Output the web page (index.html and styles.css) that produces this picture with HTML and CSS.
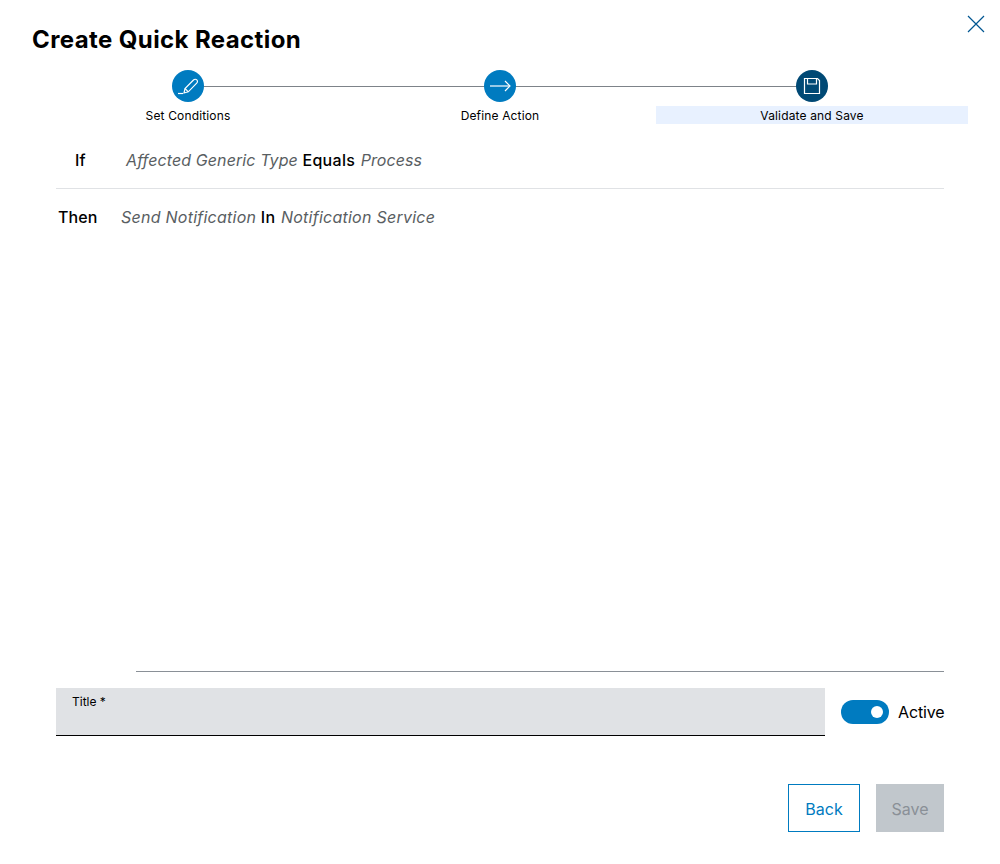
FILE: index.html
```html
<!DOCTYPE html>
<html lang="en">
<head>
<meta charset="utf-8">
<title>Create Quick Reaction</title>
<link rel="stylesheet" href="styles.css">
</head>
<body>
<div class="dialog">
  <header class="head">
    <h1 class="title">Create Quick Reaction</h1>
    <button class="close" aria-label="Close">
      <svg width="18" height="18" viewBox="0 0 18 18"><path d="M1 1L17 17M17 1L1 17" stroke="#005691" stroke-width="1.2" fill="none"/></svg>
    </button>
  </header>
  <ol class="stepper">
    <li class="step">
      <span class="dot">
        <svg width="24" height="24" viewBox="0 0 24 24" fill="none" stroke="#fff" stroke-width="1.2"><path d="M2 19.5H7"/><path d="M8 19L9 14.5L17.5 6C18.5 5 19.9 5 20.8 5.9C21.7 6.8 21.7 8.1 20.7 9.1L12.3 17.8Z"/><path d="M9 14.5L12.3 17.8"/></svg>
      </span>
      <span class="label">Set Conditions</span>
    </li>
    <li class="step">
      <span class="dot">
        <svg width="24" height="24" viewBox="0 0 24 24" fill="none" stroke="#fff" stroke-width="1.2"><path d="M2 12H21.5"/><path d="M17 7L22 12L17 17"/></svg>
      </span>
      <span class="label">Define Action</span>
    </li>
    <li class="step step-current">
      <span class="dot">
        <svg width="24" height="24" viewBox="0 0 24 24" fill="none" stroke="#fff" stroke-width="1.2"><path d="M4.5 4.5H17.5L19.5 6.5V19.5H4.5Z"/><path d="M7.5 4.5V10H16.5V4.5"/></svg>
      </span>
      <span class="label">Validate and Save</span>
    </li>
  </ol>
  <section class="rules">
    <div class="rule rule-if">
      <span class="kw kw-if">If</span>
      <span class="expr"><em>Affected Generic Type</em> <b>Equals</b> <em>Process</em></span>
    </div>
    <div class="rule rule-then">
      <span class="kw">Then</span>
      <span class="expr"><em>Send Notification</em> <b>In</b> <em>Notification Service</em></span>
    </div>
  </section>
  <div class="divider"></div>
  <div class="form-row">
    <label class="field">
      <span class="field-label">Title *</span>
    </label>
    <div class="toggle-wrap">
      <span class="toggle"><span class="knob"></span></span>
      <span class="toggle-label">Active</span>
    </div>
  </div>
  <footer class="actions">
    <button class="btn btn-back">Back</button>
    <button class="btn btn-save" disabled>Save</button>
  </footer>
</div>
</body>
</html>
```

FILE: styles.css
```css
* { box-sizing: border-box; }
html, body { margin: 0; padding: 0; background: #fff; }
body { font-family: Inter, "Noto Sans", sans-serif; color: #000; }
.dialog { width: 1000px; height: 864px; padding: 0 32px 0; display: flex; flex-direction: column; position: relative; }
.head { height: 70px; padding-top: 24px; }
.title { margin: 0; font-size: 24px; line-height: 32px; font-weight: 700; letter-spacing: 0.4px; }
.close { position: absolute; top: 15px; right: 15px; width: 18px; height: 18px; padding: 0; border: 0; background: none; display: block; }
.close svg { display: block; }
.stepper { list-style: none; margin: 0; padding: 0; display: grid; grid-template-columns: repeat(3, 312px); position: relative; width: 936px; }
.stepper::before { content: ""; position: absolute; left: 156px; right: 156px; top: 16px; height: 1px; background: #7d8389; }
.step { display: flex; flex-direction: column; align-items: center; position: relative; }
.dot { width: 32px; height: 32px; border-radius: 50%; background: #007bc0; display: flex; align-items: center; justify-content: center; }
.label { margin-top: 4px; width: 100%; height: 18px; font-size: 12px; line-height: 20px; text-align: center; letter-spacing: 0.15px; }
.step-current .dot { background: #004975; }
.step-current .label { background: #e8f1ff; }
.rules { margin: 0 24px; }
.rule { display: flex; font-size: 16px; line-height: 20px; }
.rule-if { height: 65px; padding-top: 26px; border-bottom: 1px solid #e0e2e5; }
.rule-then { padding-top: 18px; }
.kw { font-weight: 500; width: 65px; padding-left: 2px; letter-spacing: 0.1px; }
.kw-if { width: 70px; padding-left: 19px; }
.expr em { color: #595e62; font-style: italic; letter-spacing: 0.25px; }
.rule-if .expr em { letter-spacing: 0.1px; }
.expr b { font-weight: 500; letter-spacing: 0.3px; margin-right: 1px; }
.divider { height: 1px; background: #8a9097; margin: 444px 24px 0 104px; }
.form-row { display: flex; margin: 16px 24px 0; align-items: center; }
.field { flex: none; width: 769px; height: 48px; background: #e0e2e5; border-bottom: 1px solid #000; padding: 6px 16px; display: block; }
.field-label { display: block; font-size: 12px; line-height: 16px; color: #000; }
.toggle-wrap { flex: none; display: flex; align-items: center; margin-left: 16px; }
.toggle { width: 48px; height: 24px; border-radius: 12px; background: #007bc0; position: relative; display: block; }
.knob { position: absolute; right: 6px; top: 6px; width: 12px; height: 12px; border-radius: 50%; background: #fff; }
.toggle-label { margin-left: 9px; font-size: 16px; line-height: 24px; letter-spacing: -0.15px; }
.actions { display: flex; justify-content: flex-end; gap: 16px; margin: 48px 24px 0; }
.btn { height: 48px; font-family: inherit; font-size: 16px; padding: 2px 0 0; }
.btn-back { width: 72px; background: #fff; border: 1px solid #007bc0; color: #007bc0; }
.btn-save { width: 68px; background: #c1c7cc; border: 0; color: #8a9097; }
```
